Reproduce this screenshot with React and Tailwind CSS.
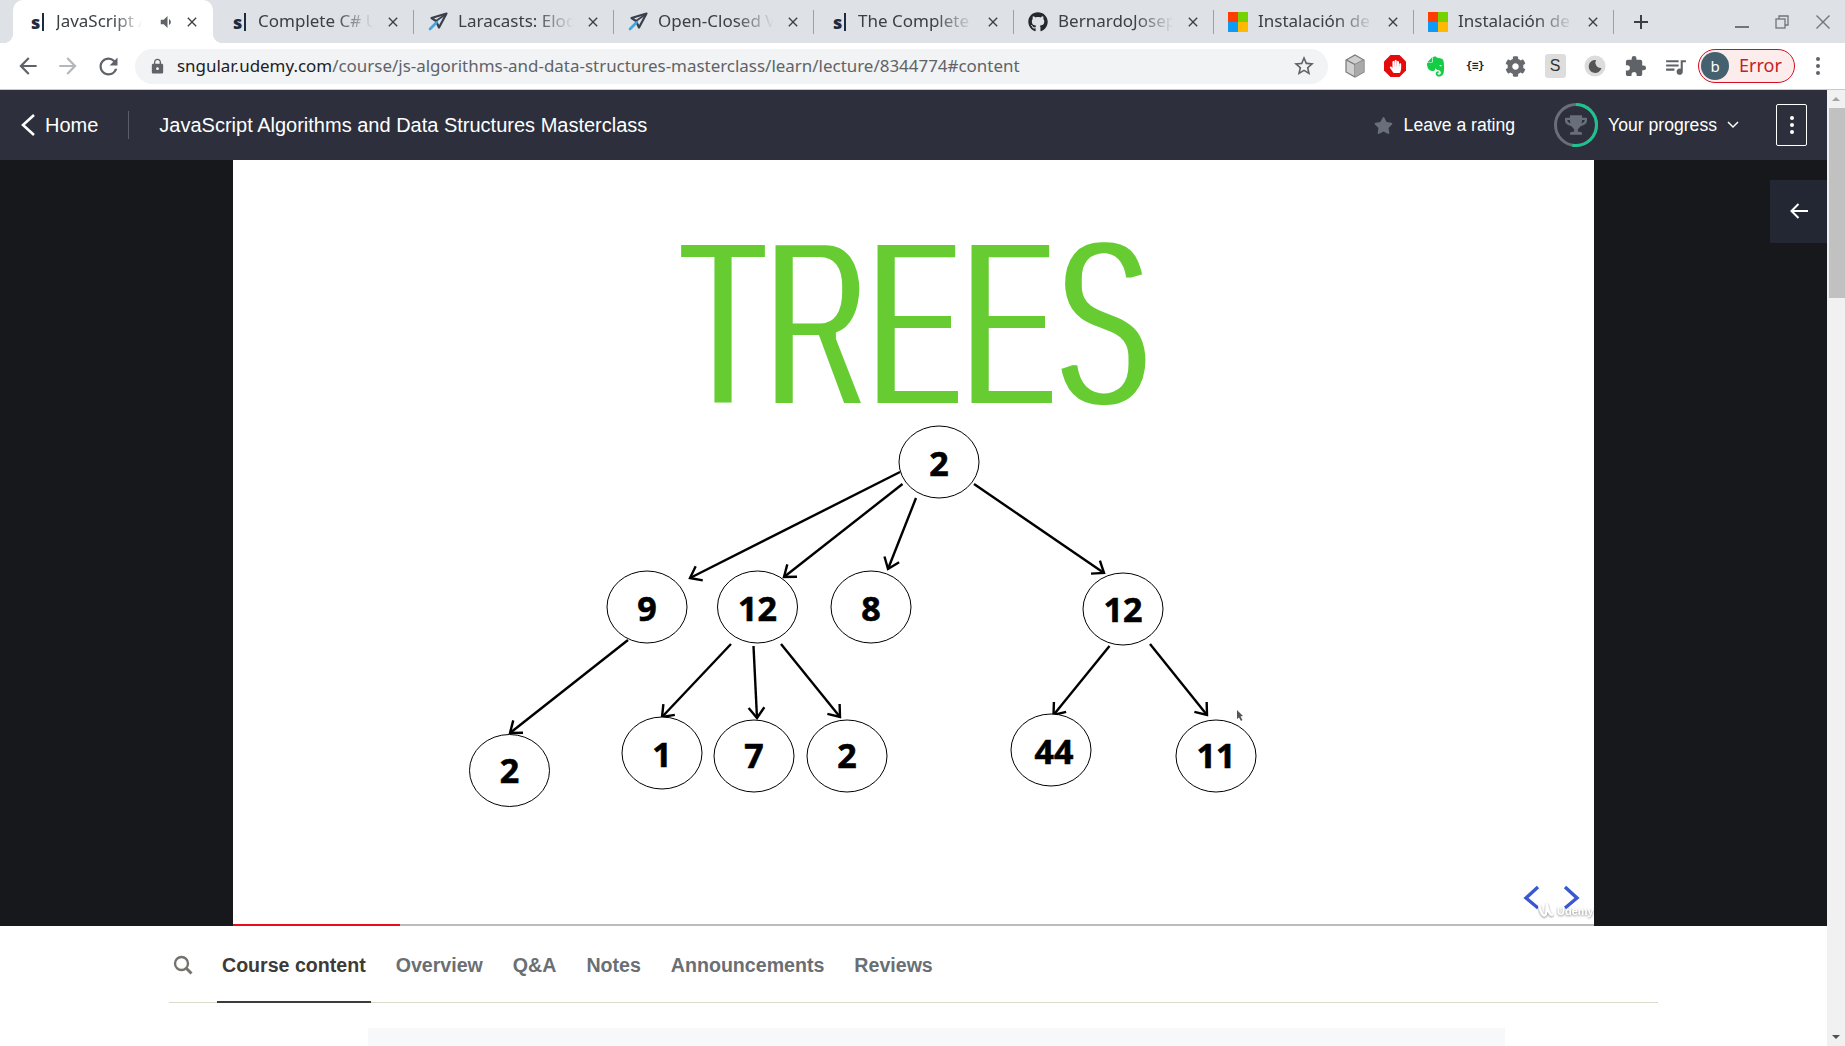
import React from "react";
import { FaEvernote, FaGithub, FaHandPaper, FaCog, FaStar, FaTrophy } from "react-icons/fa";
import { MdArrowBack, MdArrowForward, MdRefresh, MdLock, MdStarBorder, MdQueueMusic, MdVolumeDown, MdClose, MdAdd, MdExtension } from "react-icons/md";

const UI_FONT = "font-['Noto_Sans',sans-serif]";

const SFavicon = () => (
  <span className="flex w-[16px] items-center gap-[2px] text-[18px] leading-none font-black text-[#1c2b3f]">
    s<span className="h-[18px] w-[1.5px] bg-[#1c2b3f]" />
  </span>
);

const PlaneFavicon = () => (
  <svg width="20" height="20" viewBox="0 0 20 20" fill="none">
    <path d="M18.5 1.5 L3.5 6 L8 9 L11 15.5 Z" stroke="#39404d" strokeWidth="2.2" strokeLinejoin="round" />
    <path d="M18 2 L8 9" stroke="#39404d" strokeWidth="1.6" />
    <path d="M8.5 10.5 L2 17" stroke="#3aa5e8" strokeWidth="2.6" strokeLinecap="round" />
  </svg>
);

const WindowsFavicon = () => (
  <span className="grid h-[20px] w-[20px] grid-cols-2 grid-rows-2">
    <span className="bg-[#ff3d00]" />
    <span className="bg-[#76d100]" />
    <span className="bg-[#0f9bf5]" />
    <span className="bg-[#ffb900]" />
  </span>
);

const tabs = [
  { title: "JavaScript Algorithms", icon: <SFavicon />, active: true },
  { title: "Complete C# Unity", icon: <SFavicon /> },
  { title: "Laracasts: Eloquent", icon: <PlaneFavicon />, wide: true },
  { title: "Open-Closed Video", icon: <PlaneFavicon />, wide: true },
  { title: "The Complete Guide", icon: <SFavicon /> },
  { title: "BernardoJoseph", icon: <FaGithub size={20} color="#24292e" />, wide: true },
  { title: "Instalación de Windows", icon: <WindowsFavicon />, wide: true },
  { title: "Instalación de Windows", icon: <WindowsFavicon />, wide: true },
];

const Tab = ({ tab, showSeparator }) => (
  <div className={`relative flex h-full w-[200px] shrink-0 items-center ${tab.active ? "rounded-t-[10px] bg-white" : ""}`}>
    {tab.active && (
      <>
        <span className="absolute bottom-0 left-[-10px] h-[10px] w-[10px] bg-[radial-gradient(circle_at_0_0,#dee1e6_10px,#ffffff_10.5px)]" />
        <span className="absolute right-[-10px] bottom-0 h-[10px] w-[10px] bg-[radial-gradient(circle_at_100%_0,#dee1e6_10px,#ffffff_10.5px)]" />
      </>
    )}
    <span className={`flex shrink-0 items-center ${tab.active ? "w-[43px] pl-[18px]" : "w-[45px]"} ${tab.wide ? "pl-[15px]" : tab.active ? "" : "pl-[20px]"}`}>
      {tab.icon}
    </span>
    <span className={`${tab.active ? "w-[88px]" : "w-[118px]"} overflow-hidden pb-[1px] text-[17px] whitespace-nowrap text-[#3c4043] [mask-image:linear-gradient(to_right,black_65%,transparent_98%)]`}>
      {tab.title}
    </span>
    {tab.active && <MdVolumeDown size={18} color="#5f6368" className="ml-[13px] shrink-0" />}
    <MdClose size={16} color="#3c4043" className="ml-[9px] shrink-0" />
    {showSeparator && <span className="absolute top-[10px] right-[-1px] h-[24px] w-[1px] bg-[#9aa0a6]" />}
  </div>
);

const TabStrip = () => (
  <div className={`flex h-[43px] items-center bg-[#dee1e6] pl-[13px] ${UI_FONT}`}>
    {tabs.map((tab, i) => (
      <Tab key={i} tab={tab} showSeparator={!tab.active} />
    ))}
    <MdAdd size={24} color="#3c4043" className="ml-[16px]" />
    <div className="ml-auto flex items-center text-[#5f6368]">
      <span className="mt-[10px] h-[2px] w-[14px] bg-[#70757a]" />
      <svg width="14" height="14" viewBox="0 0 14 14" fill="none" stroke="#70757a" strokeWidth="1.3" className="ml-[26px]">
        <rect x="1" y="4" width="9" height="9" />
        <path d="M4 4 V1 H13 V10 H10" />
      </svg>
      <svg width="14" height="14" viewBox="0 0 14 14" stroke="#70757a" strokeWidth="1.4" className="mr-[15px] ml-[27px]">
        <path d="M0.5 0.5 L13.5 13.5 M13.5 0.5 L0.5 13.5" />
      </svg>
    </div>
  </div>
);

const ExtensionSlot = ({ children }) => (
  <span className="flex h-[40px] w-[40px] shrink-0 items-center justify-center">{children}</span>
);

const Toolbar = () => (
  <div className={`flex h-[47px] items-center border-b border-[#c8c9cc] bg-white pl-[8px] ${UI_FONT}`}>
    <ExtensionSlot><MdArrowBack size={26} color="#5f6368" /></ExtensionSlot>
    <ExtensionSlot><MdArrowForward size={26} color="#b4b7bb" /></ExtensionSlot>
    <ExtensionSlot><MdRefresh size={27} color="#5f6368" /></ExtensionSlot>

    <div className="ml-[7px] flex h-[35px] w-[1193px] items-center rounded-full bg-[#f1f3f4] pr-[12px] pl-[14px]">
      <MdLock size={17} color="#5f6368" />
      <span className="ml-[11px] text-[16.95px] whitespace-nowrap text-[#5f6368]">
        <span className="text-[#202124]">sngular.udemy.com</span>/course/js-algorithms-and-data-structures-masterclass/learn/lecture/8344774#content
      </span>
      <MdStarBorder size={24} color="#5f6368" className="ml-auto" />
    </div>

    <div className="ml-[7px] flex items-center">
      <ExtensionSlot>
        <svg width="20" height="24" viewBox="0 0 20 24" stroke="#777" strokeWidth="1.2">
          <path d="M10 1 L19 6 V18 L10 23 L1 18 V6 Z" fill="#d0d0d0" />
          <path d="M1.5 6 L10 10.5 L18.5 6 M10 10.5 V23" fill="none" />
          <path d="M10 10.5 L18.5 6 V18 L10 23 Z" fill="#a9a9a9" stroke="none" />
        </svg>
      </ExtensionSlot>
      <ExtensionSlot>
        <span className="relative flex h-[22px] w-[22px] items-center justify-center">
          <svg width="22" height="22" viewBox="0 0 22 22" className="absolute inset-0">
            <path d="M6.5 0 H15.5 L22 6.5 V15.5 L15.5 22 H6.5 L0 15.5 V6.5 Z" fill="#e30b0b" />
          </svg>
          <FaHandPaper size={13} color="#ffffff" className="relative" />
        </span>
      </ExtensionSlot>
      <ExtensionSlot><FaEvernote size={23} color="#14cc45" /></ExtensionSlot>
      <ExtensionSlot>
        <span className="font-['DejaVu_Sans_Mono',monospace] text-[11px] font-bold tracking-[-0.5px] text-[#222]">{"{≡}"}</span>
      </ExtensionSlot>
      <ExtensionSlot><FaCog size={21} color="#666a6e" /></ExtensionSlot>
      <ExtensionSlot>
        <span className="flex h-[24px] w-[21px] items-center justify-center rounded-[3px] bg-[#dddddd] font-['Liberation_Sans',sans-serif] text-[16px] text-[#333]">S</span>
      </ExtensionSlot>
      <ExtensionSlot>
        <svg width="22" height="22" viewBox="0 0 22 22">
          <circle cx="11" cy="11" r="10.5" fill="#dcdcdc" />
          <path d="M12 5 A6.5 6.5 0 1 0 17.5 13 A5.5 5.5 0 0 1 12 5 Z" fill="#555" />
        </svg>
      </ExtensionSlot>
      <ExtensionSlot><MdExtension size={23} color="#5f6368" /></ExtensionSlot>
      <ExtensionSlot><MdQueueMusic size={25} color="#5f6368" /></ExtensionSlot>
    </div>

    <div className="ml-[3px] flex h-[34px] w-[97px] items-center rounded-full border border-[#d50f1f] bg-[#fdecec] pl-[2px]">
      <span className="flex h-[28px] w-[28px] items-center justify-center rounded-full bg-[#45606f] text-[15px] text-white">b</span>
      <span className="ml-[10px] pb-[2px] text-[18px] leading-none text-[#c5221f]">Error</span>
    </div>
    <span className="ml-[21px] flex flex-col gap-[3px]">
      <span className="h-[4px] w-[4px] rounded-full bg-[#5f6368]" />
      <span className="h-[4px] w-[4px] rounded-full bg-[#5f6368]" />
      <span className="h-[4px] w-[4px] rounded-full bg-[#5f6368]" />
    </span>
  </div>
);

const CourseHeader = () => (
  <header className="flex h-[70px] shrink-0 items-center bg-[#2d2f3c] font-['Liberation_Sans',sans-serif] text-white">
    <svg width="16" height="22" viewBox="0 0 16 22" fill="none" stroke="#ffffff" strokeWidth="2.6" className="ml-[20px]">
      <path d="M14 1 L3 11 L14 21" />
    </svg>
    <span className="ml-[9px] pb-[1px] text-[20px]">Home</span>
    <span className="ml-[30px] h-[28px] w-[1px] bg-[#5a5c68]" />
    <h1 className="ml-[30px] pb-[1px] text-[20px] font-normal">JavaScript Algorithms and Data Structures Masterclass</h1>

    <div className="ml-auto flex items-center">
      <FaStar size={19} color="#686f7a" />
      <span className="ml-[11px] text-[17.6px]">Leave a rating</span>
      <span className="relative ml-[39px] flex h-[44px] w-[44px] items-center justify-center">
        <svg width="44" height="44" viewBox="0 0 44 44" fill="none" strokeWidth="3" className="absolute inset-0 -rotate-90">
          <circle cx="22" cy="22" r="20.5" stroke="#686f7a" />
          <circle cx="22" cy="22" r="20.5" stroke="#1ec28e" pathLength="100" strokeDasharray="53 100" />
        </svg>
        <FaTrophy size={22} color="#686f7a" className="relative" />
      </span>
      <span className="ml-[10px] text-[17.6px]">Your progress</span>
      <svg width="12" height="8" viewBox="0 0 12 8" fill="none" stroke="#ffffff" strokeWidth="1.5" className="ml-[10px]">
        <path d="M1 1 L6 6 L11 1" />
      </svg>
      <button className="mr-[20px] ml-[37px] flex h-[42px] w-[31px] flex-col items-center justify-center gap-[3px] rounded-[2px] border border-white">
        <span className="h-[4px] w-[4px] rounded-full bg-white" />
        <span className="h-[4px] w-[4px] rounded-full bg-white" />
        <span className="h-[4px] w-[4px] rounded-full bg-white" />
      </button>
    </div>
  </header>
);

// coordinates below are page pixels, the viewBox of the slide starts at its top left corner
const nodes = [
  { x: 939, y: 462, label: "2" },
  { x: 647, y: 607, label: "9" },
  { x: 757.5, y: 607, label: "12" },
  { x: 871, y: 607, label: "8" },
  { x: 1123, y: 609, label: "12", dy: -1 },
  { x: 509.5, y: 770.5, label: "2", dy: -1 },
  { x: 662, y: 753, label: "1" },
  { x: 754, y: 756, label: "7", dy: -1.5 },
  { x: 847, y: 756, label: "2", dy: -2 },
  { x: 1051, y: 750, label: "44", dx: 3 },
  { x: 1216, y: 756, label: "11", dy: -2 },
];

const edges = [
  [900, 472, 690, 578],
  [902.5, 484, 784, 577],
  [916, 498, 888, 569],
  [974, 484, 1104, 573],
  [628, 640, 510, 733],
  [731, 644, 662, 717],
  [753.5, 646, 757, 718],
  [781, 644, 840, 717],
  [1109.5, 646, 1053.5, 715],
  [1150, 644, 1207, 715],
];

const arrowHead = ([x1, y1, x2, y2]) => {
  const angle = Math.atan2(y2 - y1, x2 - x1);
  const point = (a) => `${x2 - 13 * Math.cos(angle + a)} ${y2 - 13 * Math.sin(angle + a)}`;
  return `M${point(0.65)} L${x2} ${y2} L${point(-0.65)}`;
};

const Slide = () => (
  <div className="relative h-full w-[1361px] bg-white">
    <svg viewBox="233 160 1361 766" className="h-full w-full">
      {/* the slide's title face has thick stems and thin bars, so squeeze the bars and widen the stems */}
      <filter id="title-weight" x="-5%" y="-5%" width="110%" height="110%">
        <feMorphology operator="erode" radius="0 3" />
        <feMorphology operator="dilate" radius="2 0" />
        <feGaussianBlur stdDeviation="0.4" />
      </filter>
      <text
        x="680"
        y="406"
        fontFamily="'Liberation Sans', sans-serif"
        fontSize="237"
        textLength="470"
        lengthAdjust="spacingAndGlyphs"
        fill="#66cc33"
        filter="url(#title-weight)"
      >
        TREES
      </text>

      {edges.map((edge, i) => (
        <g key={i} fill="none" stroke="#000" strokeWidth="2.4">
          <line x1={edge[0]} y1={edge[1]} x2={edge[2]} y2={edge[3]} />
          <path d={arrowHead(edge)} />
        </g>
      ))}

      {nodes.map((node, i) => (
        <g key={i}>
          <ellipse cx={node.x} cy={node.y} rx="40" ry="36" fill="#fff" stroke="#000" strokeWidth="1" />
          <text
            x={node.x + (node.dx || 0)}
            y={node.y + 13.5 + (node.dy || 0)}
            textAnchor="middle"
            fontFamily="'Open Sans', sans-serif"
            fontSize="34"
            fontWeight="700"
            fill="#000"
            stroke="#000"
            strokeWidth="0.6"
          >
            {node.label}
          </text>
        </g>
      ))}

      <path d="M1237 710 L1237 719 L1239 717.5 L1241 721 L1242.5 720 L1240.5 716.5 L1243 716 Z" fill="#555" />

      <g fill="none" stroke="#3a58d0" strokeWidth="3.4">
        <path d="M1538 887 L1526 898 L1538 908" />
        <path d="M1565 887 L1577 898 L1565 908" />
      </g>
      <g className="[filter:drop-shadow(0_1px_1px_rgba(0,0,0,0.45))]">
        <path d="M1539 905 C1541 914 1544 918 1546 914 C1547 910 1546 906 1547 905 C1548 910 1550 917 1553 914" fill="none" stroke="#fff" strokeWidth="2.4" />
        <text x="1557" y="915" fontFamily="'Liberation Sans', sans-serif" fontSize="11" fontWeight="700" fill="#fff">
          Udemy
        </text>
      </g>
    </svg>
    <div className="absolute right-0 bottom-0 left-0 h-[2px] bg-[#bcbcbc]">
      <div className="h-full w-[167px] bg-[#e3101c]" />
    </div>
  </div>
);

const VideoArea = () => (
  <section className="relative flex h-[766px] shrink-0 bg-[#17181c] pl-[233px]">
    <Slide />
    <button className="absolute top-[20px] right-0 flex h-[63px] w-[57px] items-center justify-center bg-[#232733] pb-[2px]">
      <svg width="18" height="16" viewBox="0 0 18 16" fill="none" stroke="#ffffff" strokeWidth="2">
        <path d="M18 8 H2 M8.5 1 L1.5 8 L8.5 15" />
      </svg>
    </button>
  </section>
);

const lectureTabs = ["Course content", "Overview", "Q&A", "Notes", "Announcements", "Reviews"];

const LectureTabs = () => (
  <nav className="ml-[169px] flex h-[77px] w-[1489px] shrink-0 items-center border-b border-[#dcdacb] font-['Liberation_Sans',sans-serif] text-[19.6px] font-bold text-[#6a6f73]">
    <span className="flex w-[48px] pt-[2px] pl-[4px]">
      <svg width="20" height="20" viewBox="0 0 20 20" fill="none" stroke="#73726c" strokeWidth="2.4">
        <circle cx="8.5" cy="8.5" r="6.5" />
        <path d="M13 13 L18.5 18.5" strokeWidth="3" />
      </svg>
    </span>
    <div className="flex h-full gap-[20px]">
      {lectureTabs.map((label, i) => (
        <span
          key={label}
          className={`flex h-[77px] items-center px-[5px] ${i === 0 ? "border-b-[2px] border-[#3c3b37] pt-[5px] text-[#3c3b37]" : "pt-[3px]"}`}
        >
          {label}
        </span>
      ))}
    </div>
  </nav>
);

const Scrollbar = () => (
  <div className="flex w-[18px] shrink-0 flex-col bg-[#f1f1f1]">
    <div className="flex h-[18px] shrink-0 items-center justify-center">
      <span className="h-0 w-0 border-x-[4px] border-b-[4px] border-x-transparent border-b-[#a3a3a3]" />
    </div>
    <div className="ml-[2px] h-[190px] bg-[#c1c1c1]" />
    <div className="mt-auto flex h-[18px] items-center justify-center">
      <span className="h-0 w-0 border-x-[4px] border-t-[4px] border-x-transparent border-t-[#505050]" />
    </div>
  </div>
);

const App = () => {
  return (
    <div className="flex h-screen flex-col overflow-hidden bg-white">
      <TabStrip />
      <Toolbar />
      <div className="flex min-h-0 flex-1">
        <main className="flex min-w-0 flex-1 flex-col overflow-hidden">
          <CourseHeader />
          <VideoArea />
          <LectureTabs />
          <div className="mt-[25px] ml-[368px] h-[60px] w-[1137px] shrink-0 bg-[#f7f8fa]" />
        </main>
        <Scrollbar />
      </div>
    </div>
  );
};

export default App;
